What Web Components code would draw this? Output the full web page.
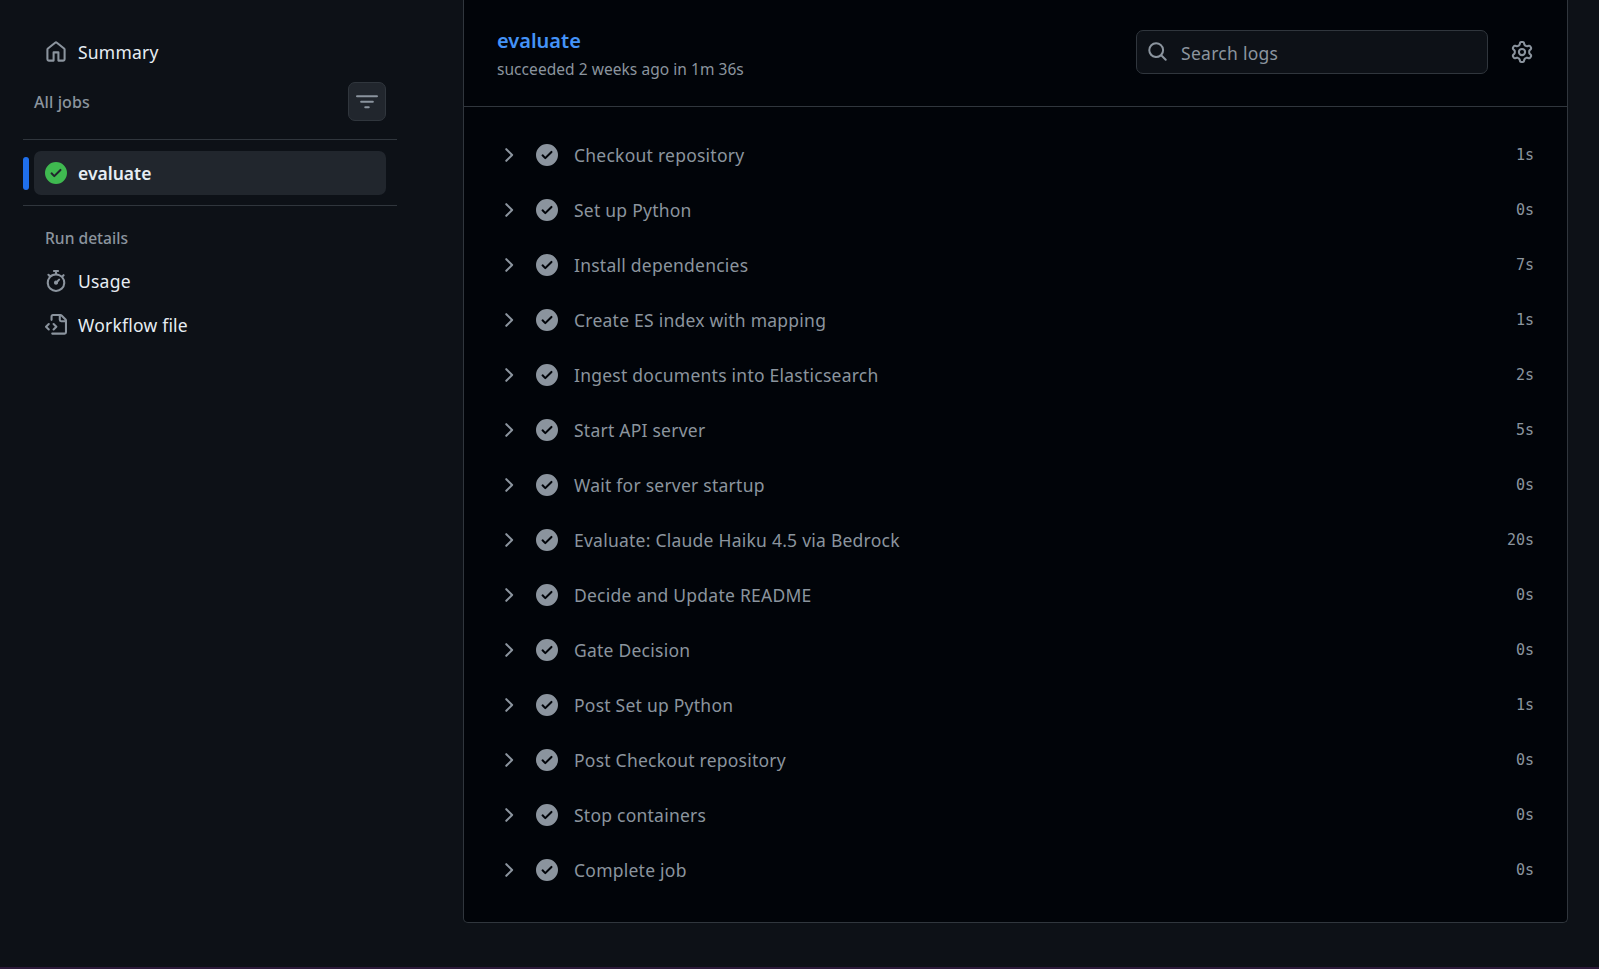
<!DOCTYPE html>
<html>
<head>
<meta charset="utf-8">
<title>evaluate</title>
<style>
  html, body { margin: 0; padding: 0; height: 100%; background: #0d1117; overflow: hidden; }
  body { font-family: "Noto Sans", "Open Sans", sans-serif; }
</style>
</head>
<body>
<run-page>
  <job-sidebar slot="sidebar"></job-sidebar>
  <job-panel slot="main" name="evaluate" meta="succeeded 2 weeks ago in 1m 36s">
    <job-step time="1s">Checkout repository</job-step>
    <job-step time="0s">Set up Python</job-step>
    <job-step time="7s">Install dependencies</job-step>
    <job-step time="1s">Create ES index with mapping</job-step>
    <job-step time="2s">Ingest documents into Elasticsearch</job-step>
    <job-step time="5s">Start API server</job-step>
    <job-step time="0s">Wait for server startup</job-step>
    <job-step time="20s">Evaluate: Claude Haiku 4.5 via Bedrock</job-step>
    <job-step time="0s">Decide and Update README</job-step>
    <job-step time="0s">Gate Decision</job-step>
    <job-step time="1s">Post Set up Python</job-step>
    <job-step time="0s">Post Checkout repository</job-step>
    <job-step time="0s">Stop containers</job-step>
    <job-step time="0s">Complete job</job-step>
  </job-panel>
</run-page>

<script>
const ICONS = {
  home: 'M6.906.664a1.749 1.749 0 0 1 2.187 0l5.25 4.2c.415.332.657.835.657 1.367v7.019A1.75 1.75 0 0 1 13.25 15h-3.5a.75.75 0 0 1-.75-.75V9H7v5.25a.75.75 0 0 1-.75.75h-3.5A1.75 1.75 0 0 1 1 13.25V6.23c0-.531.242-1.034.657-1.366l5.25-4.2Zm1.25 1.171a.25.25 0 0 0-.312 0l-5.25 4.2a.25.25 0 0 0-.094.196v7.019c0 .138.112.25.25.25H5.5V8.25a.75.75 0 0 1 .75-.75h3.5a.75.75 0 0 1 .75.75v5.25h2.75a.25.25 0 0 0 .25-.25V6.23a.25.25 0 0 0-.094-.195Z',
  gear: 'M8 0a8.2 8.2 0 0 1 .701.031C9.444.095 9.99.645 10.16 1.29l.288 1.107c.018.066.079.158.212.224.231.114.454.243.668.386.123.082.233.09.299.071l1.103-.303c.644-.176 1.392.021 1.82.63.27.385.506.792.704 1.218.315.675.111 1.422-.364 1.891l-.814.806c-.049.048-.098.147-.088.294.016.257.016.515 0 .772-.01.147.038.246.088.294l.814.806c.475.469.679 1.216.364 1.891a7.977 7.977 0 0 1-.704 1.217c-.428.61-1.176.807-1.82.63l-1.102-.302c-.067-.019-.177-.011-.3.071a5.909 5.909 0 0 1-.668.386c-.133.066-.194.158-.211.224l-.29 1.106c-.168.646-.715 1.196-1.458 1.26a8.006 8.006 0 0 1-1.402 0c-.743-.064-1.289-.614-1.458-1.26l-.289-1.106c-.018-.066-.079-.158-.212-.224a5.738 5.738 0 0 1-.668-.386c-.123-.082-.233-.09-.299-.071l-1.103.303c-.644.176-1.392-.021-1.82-.63a8.12 8.12 0 0 1-.704-1.218c-.315-.675-.111-1.422.363-1.891l.815-.806c.05-.048.098-.147.088-.294a6.214 6.214 0 0 1 0-.772c.01-.147-.038-.246-.088-.294l-.815-.806C.635 6.045.431 5.298.746 4.623a7.92 7.92 0 0 1 .704-1.217c.428-.61 1.176-.807 1.82-.63l1.102.302c.067.019.177.011.3-.071.214-.143.437-.272.668-.386.133-.066.194-.158.211-.224l.29-1.106C6.009.645 6.556.095 7.299.03 7.53.01 7.764 0 8 0Zm-.571 1.525c-.036.003-.108.036-.137.146l-.289 1.105c-.147.561-.549.967-.998 1.189-.173.086-.34.183-.5.29-.417.278-.97.423-1.529.27l-1.103-.303c-.109-.03-.175.016-.195.045-.22.312-.412.644-.573.99-.014.031-.021.11.059.19l.815.806c.411.406.562.957.53 1.456a4.709 4.709 0 0 0 0 .582c.032.499-.119 1.05-.53 1.456l-.815.806c-.081.08-.073.159-.059.19.162.346.353.677.573.989.02.03.085.076.195.046l1.102-.303c.56-.153 1.113-.008 1.53.27.161.107.328.204.501.29.447.222.85.629.997 1.189l.289 1.105c.029.109.101.143.137.146a6.6 6.6 0 0 0 1.142 0c.036-.003.108-.036.137-.146l.289-1.105c.147-.561.549-.967.998-1.189.173-.086.34-.183.5-.29.417-.278.97-.423 1.529-.27l1.103.303c.109.029.175-.016.195-.045.22-.313.411-.644.573-.99.014-.031.021-.11-.059-.19l-.815-.806c-.411-.406-.562-.957-.53-1.456a4.709 4.709 0 0 0 0-.582c-.032-.499.119-1.05.53-1.456l.815-.806c.081-.08.073-.159.059-.19a6.464 6.464 0 0 0-.573-.989c-.02-.03-.085-.076-.195-.046l-1.102.303c-.56.153-1.113.008-1.53-.27a4.44 4.44 0 0 0-.501-.29c-.447-.222-.85-.629-.997-1.189l-.289-1.105c-.029-.11-.101-.143-.137-.146a6.6 6.6 0 0 0-1.142 0ZM11 8a3 3 0 1 1-6 0 3 3 0 0 1 6 0ZM9.5 8a1.5 1.5 0 1 0-3.001.001A1.5 1.5 0 0 0 9.5 8Z',
  search: 'M10.68 11.74a6 6 0 0 1-7.922-8.982 6 6 0 0 1 8.982 7.922l3.04 3.04a.749.749 0 0 1-.326 1.275.749.749 0 0 1-.734-.215ZM11.5 7a4.499 4.499 0 1 0-8.997 0A4.499 4.499 0 0 0 11.5 7Z',
  filter: 'M.75 3h14.5a.75.75 0 0 1 0 1.5H.75a.75.75 0 0 1 0-1.5ZM3 7.75A.75.75 0 0 1 3.75 7h8.5a.75.75 0 0 1 0 1.5h-8.5A.75.75 0 0 1 3 7.75Zm3 4a.75.75 0 0 1 .75-.75h2.5a.75.75 0 0 1 0 1.5h-2.5a.75.75 0 0 1-.75-.75Z',
  stopwatch: 'M5.75.75A.75.75 0 0 1 6.5 0h3a.75.75 0 0 1 0 1.5h-.75v1l-.001.041a6.724 6.724 0 0 1 3.464 1.435l.007-.006.75-.75a.749.749 0 0 1 1.275.326.749.749 0 0 1-.215.734l-.75.75-.006.007a6.75 6.75 0 1 1-10.548 0L2.72 4.78l-.75-.75a.751.751 0 0 1 .018-1.042.751.751 0 0 1 1.042-.018l.75.75.007.006A6.72 6.72 0 0 1 7.25 2.541V1.5H6.5a.75.75 0 0 1-.75-.75ZM8 14.5a5.25 5.25 0 1 0-.001-10.501A5.25 5.25 0 0 0 8 14.5Zm.389-6.7 1.33-1.33a.75.75 0 1 1 1.061 1.06L9.45 8.861A1.503 1.503 0 0 1 8 10.75a1.499 1.499 0 1 1 .389-2.95Z',
  fileCode: 'M4 1.75C4 .784 4.784 0 5.75 0h5.586c.464 0 .909.184 1.237.513l2.914 2.914c.329.328.513.773.513 1.237v8.586A1.75 1.75 0 0 1 14.25 15h-9a.75.75 0 0 1 0-1.5h9a.25.25 0 0 0 .25-.25V6h-2.75A1.75 1.75 0 0 1 10 4.25V1.5H5.75a.25.25 0 0 0-.25.25v2.5a.75.75 0 0 1-1.5 0Zm1.72 4.97a.75.75 0 0 1 1.06 0l2 2a.75.75 0 0 1 0 1.06l-2 2a.749.749 0 0 1-1.275-.326.749.749 0 0 1 .215-.734l1.47-1.47-1.47-1.47a.75.75 0 0 1 0-1.06ZM3.28 7.78 1.81 9.25l1.47 1.47a.751.751 0 0 1-.018 1.042.751.751 0 0 1-1.042.018l-2-2a.75.75 0 0 1 0-1.06l2-2a.751.751 0 0 1 1.042.018.751.751 0 0 1 .018 1.042Zm8.22-6.218V4.25c0 .138.112.25.25.25h2.688l-.011-.013-2.914-2.914-.013-.011Z',
  chevron: 'M6.22 3.22a.75.75 0 0 1 1.06 0l4.25 4.25a.75.75 0 0 1 0 1.06l-4.25 4.25a.751.751 0 0 1-1.042-.018.751.751 0 0 1-.018-1.042L9.94 8 6.22 4.28a.75.75 0 0 1 0-1.06Z',
  check: 'M8 16A8 8 0 1 1 8 0a8 8 0 0 1 0 16Zm3.78-9.72a.751.751 0 0 0-.018-1.042.751.751 0 0 0-1.042-.018L6.75 9.19 5.28 7.72a.751.751 0 0 0-1.042.018.751.751 0 0 0-.018 1.042l2 2a.75.75 0 0 0 1.06 0Z'
};

function icon(name, size) {
  return `<svg width="${size}" height="${size}" viewBox="0 0 16 16" fill="currentColor" style="display:block;flex:none"><path d="${ICONS[name]}"></path></svg>`;
}

class runPage extends HTMLElement {
  constructor() {
    super();
    this.attachShadow({ mode: 'open' });
  }
  connectedCallback() {
    this.shadowRoot.innerHTML = `
      <style>
        :host { display: block; height: 969px; background: #0d1117; position: relative; overflow: hidden; }
        .wrap { display: flex; align-items: flex-start; padding-right: 31px; }
        .side { width: 463px; flex: none; }
        .main { flex: 1; min-width: 0; }
        .strip { position: absolute; left: 0; right: 0; bottom: 0; height: 2px; background: #2d1a3a; }
      </style>
      <div class="wrap">
        <div class="side"><slot name="sidebar"></slot></div>
        <div class="main"><slot name="main"></slot></div>
      </div>
      <div class="strip"></div>`;
  }
}

class navItem extends HTMLElement {
  constructor() {
    super();
    this.attachShadow({ mode: 'open' });
  }
  connectedCallback() {
    this.shadowRoot.innerHTML = `
      <style>
        :host { display: flex; align-items: center; gap: 11px; height: 44px; padding-left: 11px; color: #e6edf3; font-size: 17.5px; letter-spacing: .22px; }
        .ic { color: #8b949e; }
      </style>
      <span class="ic">${icon(this.getAttribute('icon'), 22)}</span>
      <slot></slot>`;
  }
}

class jobSidebar extends HTMLElement {
  constructor() {
    super();
    this.attachShadow({ mode: 'open' });
  }
  connectedCallback() {
    this.shadowRoot.innerHTML = `
      <style>
        :host { display: block; padding: 30px 66px 0 23px; box-sizing: border-box; }
        .links, .details { padding-left: 11px; }
        .head { display: flex; align-items: center; justify-content: space-between; height: 39px; padding: 0 11px; margin-top: 8px; }
        .head span { color: #8b949e; font-size: 16px; font-weight: 500; letter-spacing: .1px; }
        .filter { width: 38px; height: 39px; box-sizing: border-box; border: 1px solid #30363d; border-radius: 7px; background: #21262d; color: #8b949e; display: flex; align-items: center; justify-content: center; }
        hr { border: 0; height: 1px; background: #30363d; margin: 0; }
        .first { margin-top: 18px; }
        .job { display: flex; align-items: center; gap: 5px; margin: 11px 0 10px; }
        .bar { width: 6px; height: 33px; border-radius: 3px; background: #1f6feb; }
        .active { flex: 1; height: 44px; margin-right: 11px; display: flex; align-items: center; gap: 11px; padding-left: 11px; background: #21262d; border-radius: 7px; color: #e6edf3; font-size: 17.5px; font-weight: 600; }
        .ok { color: #3fb950; }
        .label { color: #8b949e; font-size: 15.6px; font-weight: 500; margin: 17px 0 6px 11px; line-height: 30px; height: 30px; }
      </style>
      <div class="links"><nav-item icon="home">Summary</nav-item></div>
      <div class="head"><span>All jobs</span><div class="filter">${icon('filter', 22)}</div></div>
      <hr class="first">
      <div class="job">
        <div class="bar"></div>
        <div class="active"><span class="ok">${icon('check', 22)}</span>evaluate</div>
      </div>
      <hr>
      <div class="details">
        <div class="label">Run details</div>
        <nav-item icon="stopwatch">Usage</nav-item>
        <nav-item icon="fileCode">Workflow file</nav-item>
      </div>`;
  }
}

class jobPanel extends HTMLElement {
  constructor() {
    super();
    this.attachShadow({ mode: 'open' });
  }
  connectedCallback() {
    this.shadowRoot.innerHTML = `
      <style>
        :host { display: block; background: #010409; border: 1px solid #30363d; border-top: 0; border-radius: 0 0 5px 5px; }
        header { display: flex; align-items: center; height: 107px; box-sizing: border-box; border-bottom: 1px solid #30363d; padding: 0 33px; }
        .title { flex: 1; margin-top: 1px; }
        h3 { margin: 0; color: #4493f8; font-size: 20px; font-weight: 600; line-height: 28px; }
        .meta { color: #8b949e; font-size: 15.5px; line-height: 22px; margin-top: 3px; letter-spacing: .05px; }
        .search { width: 352px; height: 44px; box-sizing: border-box; display: flex; align-items: center; gap: 13px; padding-left: 10px; border: 1px solid #30363d; border-radius: 7px; background: #0d1117; color: #8b949e; font-size: 17.5px; margin-top: -3px; }
        .search span { margin-top: 2px; letter-spacing: .28px; }
        .gear { color: #8b949e; margin-left: 23px; margin-right: 1px; margin-top: -2px; }
        .steps { padding: 20px 0 25px; }
      </style>
      <header>
        <div class="title">
          <h3>${this.getAttribute('name')}</h3>
          <div class="meta">${this.getAttribute('meta')}</div>
        </div>
        <div class="search">${icon('search', 21)}<span>Search logs</span></div>
        <div class="gear">${icon('gear', 22)}</div>
      </header>
      <div class="steps"><slot></slot></div>`;
  }
}

class jobStep extends HTMLElement {
  constructor() {
    super();
    this.attachShadow({ mode: 'open' });
  }
  connectedCallback() {
    this.shadowRoot.innerHTML = `
      <style>
        :host { display: flex; align-items: center; height: 55px; padding: 0 33px; color: #8b949e; font-size: 17.5px; letter-spacing: .24px; }
        .chev { color: #8b949e; margin-right: 17px; }
        .ok { color: #8b949e; margin-right: 16px; }
        .name { flex: 1; }
        .time { font-family: "DejaVu Sans Mono", "Liberation Mono", monospace; font-size: 15px; letter-spacing: 0; color: #8b949e; margin-top: 1px; }
      </style>
      <span class="chev">${icon('chevron', 22)}</span>
      <span class="ok">${icon('check', 22)}</span>
      <span class="name"><slot></slot></span>
      <span class="time">${this.getAttribute('time')}</span>`;
  }
}

customElements.define('nav-item', navItem);
customElements.define('job-sidebar', jobSidebar);
customElements.define('job-step', jobStep);
customElements.define('job-panel', jobPanel);
customElements.define('run-page', runPage);
</script>
</body>
</html>
